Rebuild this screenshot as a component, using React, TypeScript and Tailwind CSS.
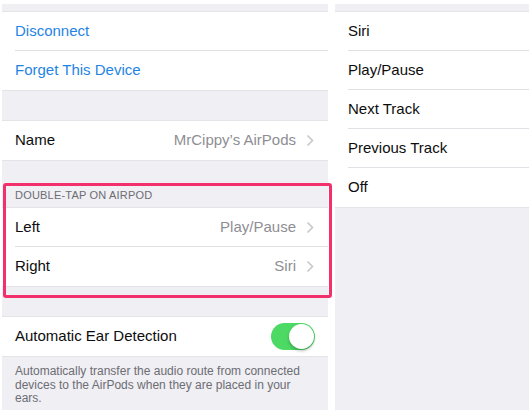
import type { ReactNode } from "react";

const font = { fontFamily: '"Liberation Sans", Arial, sans-serif' };

const Chevron = () => (
  <svg width="8" height="13" viewBox="0 0 8 13" className="ml-[10px] shrink-0">
    <path d="M1.5 1.5 L6.5 6.5 L1.5 11.5" fill="none" stroke="#c7c7cc" strokeWidth="1.6" />
  </svg>
);

const Row = ({ children, last, pr = "pr-[13px]" }: { children: ReactNode; last?: boolean; pr?: string }) => (
  <div className="bg-white pl-[13px]">
    <div className={`h-[39px] flex items-center ${pr} ${last ? "" : "border-b border-[#e1e1e5]"}`}>
      {children}
    </div>
  </div>
);

const ValueRow = ({ label, value, last }: { label: string; value: string; last?: boolean }) => (
  <Row last={last} pr="pr-[14px]">
    <span className="text-[15px] text-[#0d0d0d]">{label}</span>
    <span className="ml-auto text-[15px] text-[#8e8e93]">{value}</span>
    <Chevron />
  </Row>
);

const Group = ({ children }: { children: ReactNode }) => (
  <div className="border-y border-[#e4e4e8]">{children}</div>
);

export default function App() {
  return (
    <div className="w-[529px] h-[415px] bg-white flex pt-[4px] overflow-hidden" style={font}>
      {/* left settings pane */}
      <div className="relative ml-[2px] w-[326px] h-[406px] bg-[#efeff4] flex flex-col pt-[7px]">
        <Group>
          <Row>
            <span className="text-[15px] text-[#1f84e4]">Disconnect</span>
          </Row>
          <Row last>
            <span className="text-[15px] text-[#1f84e4]">Forget This Device</span>
          </Row>
        </Group>

        <div className="h-[29px]" />

        <Group>
          <ValueRow label="Name" value="MrCippy’s AirPods" last />
        </Group>

        <div className="h-[46px] flex items-end pl-[13px] pb-[5px]">
          <span className="text-[11px] leading-[13px] text-[#6d6d72] tracking-[0.2px]">
            DOUBLE-TAP ON AIRPOD
          </span>
        </div>

        <Group>
          <ValueRow label="Left" value="Play/Pause" />
          <ValueRow label="Right" value="Siri" last />
        </Group>

        <div className="h-[29px]" />

        <Group>
          <Row last>
            <span className="text-[15px] text-[#0d0d0d]">Automatic Ear Detection</span>
            <div className="ml-auto w-[44px] h-[27px] rounded-full bg-[#4cd964] relative">
              <div className="absolute right-[1px] top-[1px] w-[25px] h-[25px] rounded-full bg-white shadow-[0_2px_3px_rgba(0,0,0,0.25)]" />
            </div>
          </Row>
        </Group>

        <div className="pl-[13px] pr-[20px] pt-[8px] text-[12px] leading-[13.5px] text-[#6d6d72]">
          Automatically transfer the audio route from connected devices to the AirPods when they are placed in your ears.
        </div>

        {/* highlight box */}
        <div className="absolute left-[1px] top-[179px] w-[329px] h-[115px] border-[3px] border-[#f2306b] rounded-[3px]" />
      </div>

      {/* right options pane */}
      <div className="ml-[7px] flex-1 h-[406px] bg-[#efeff4] pt-[7px]">
        <div className="border-t border-[#e4e4e8]">
          {["Siri", "Play/Pause", "Next Track", "Previous Track", "Off"].map((o, i) => (
            <div key={o} className="bg-white pl-[13px]">
              <div className={`h-[39px] flex items-center ${i < 4 ? "border-b border-[#e1e1e5]" : ""}`}>
                <span className="text-[15px] text-[#0d0d0d]">{o}</span>
              </div>
            </div>
          ))}
        </div>
        <div className="border-t border-[#e4e4e8]" />
      </div>
    </div>
  );
}
